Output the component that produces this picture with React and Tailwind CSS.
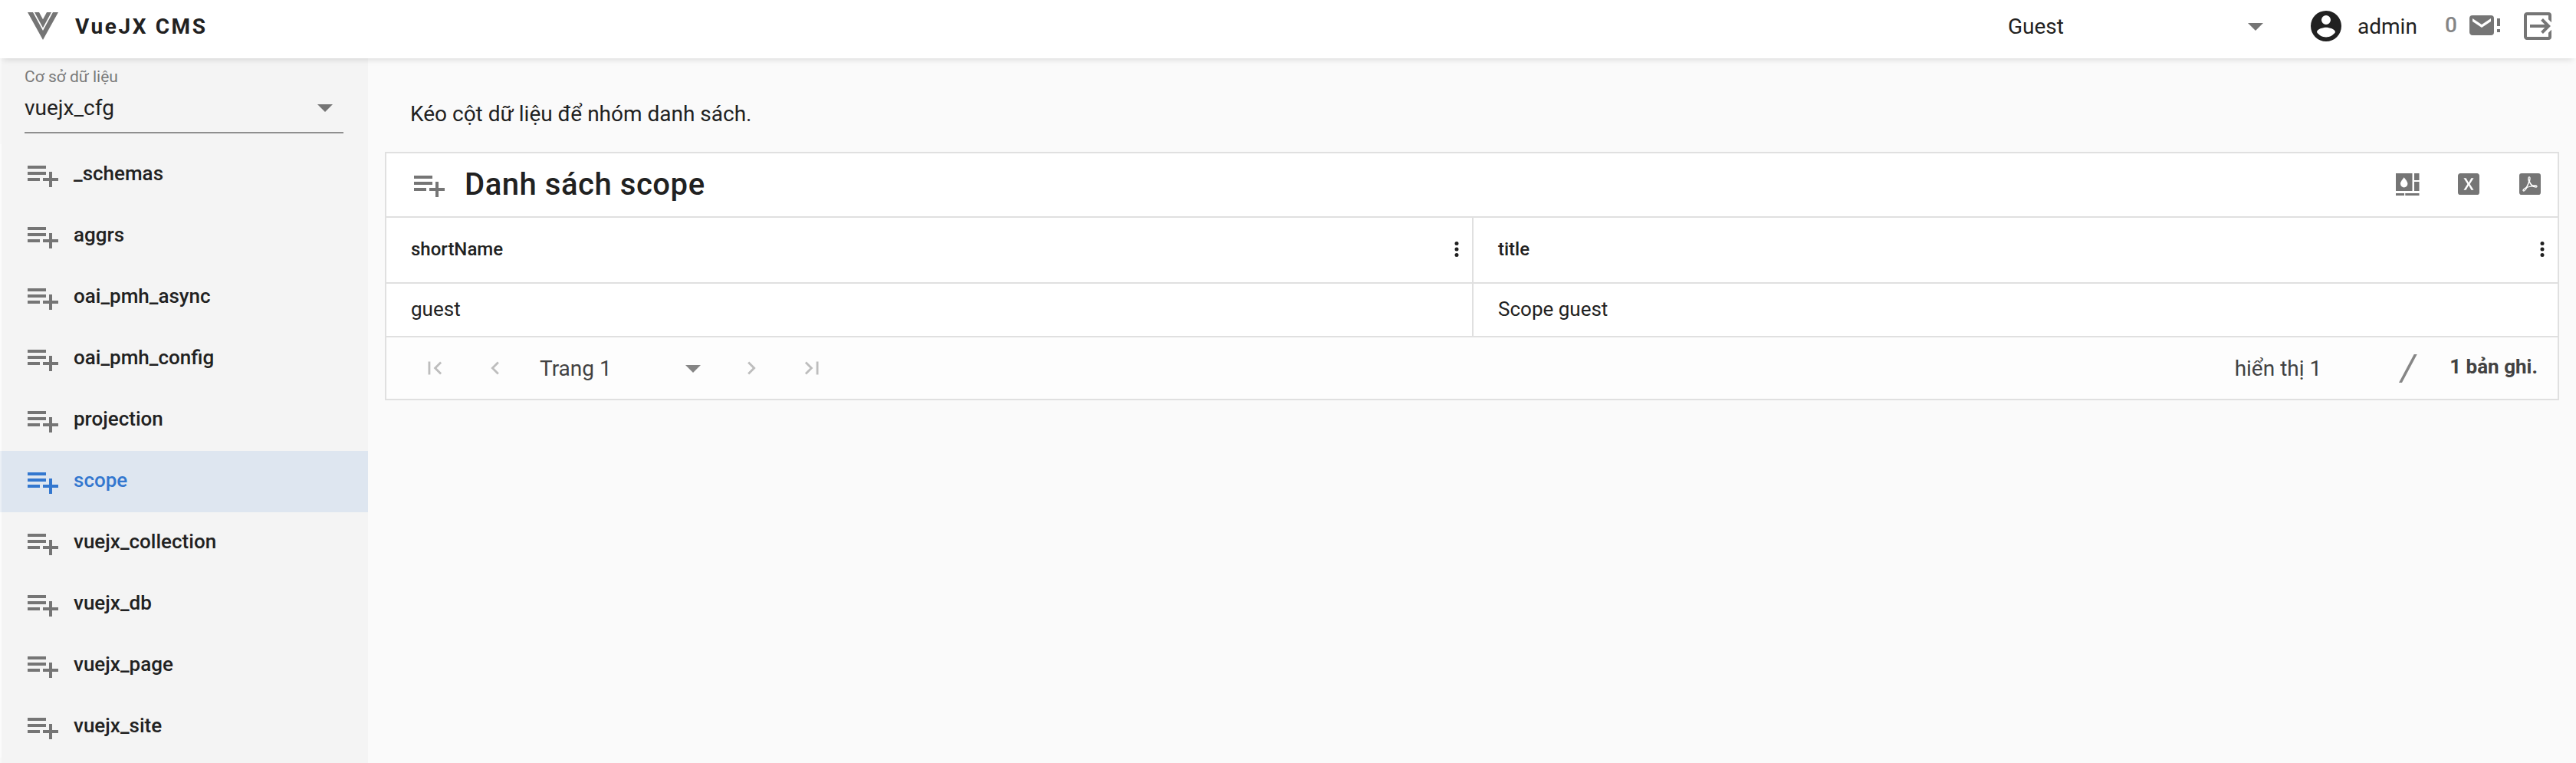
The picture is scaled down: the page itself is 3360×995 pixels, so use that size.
const ICONS = {
  vue: "M2,3H5.5L12,15L18.5,3H22L12,21L2,3M6.5,3H9.5L12,7.58L14.5,3H17.5L12,13.08L6.5,3Z",
  playlist: "M2,16H10V14H2M18,14V10H16V14H12V16H16V20H18V16H22V14M14,6H2V8H14M14,10H2V12H14V10Z",
  caret: "M7,10L12,15L17,10H7Z",
  account:
    "M12,19.2C9.5,19.2 7.29,17.92 6,16C6.03,14 10,12.9 12,12.9C14,12.9 17.97,14 18,16C16.71,17.92 14.5,19.2 12,19.2M12,5A3,3 0 0,1 15,8A3,3 0 0,1 12,11A3,3 0 0,1 9,8A3,3 0 0,1 12,5M12,2A10,10 0 0,0 2,12A10,10 0 0,0 12,22A10,10 0 0,0 22,12C22,6.47 17.5,2 12,2Z",
  mailAlert:
    "M16,9V7L10,11L4,7V9L10,13L16,9M16,5A2,2 0 0,1 18,7V16A2,2 0 0,1 16,18H4C2.89,18 2,17.1 2,16V7A2,2 0 0,1 4,5H16M20,12V7H22V12H20M20,16V14H22V16H20Z",
  logout:
    "M14.08,15.59L16.67,13H7V11H16.67L14.08,8.41L15.49,7L20.49,12L15.49,17L14.08,15.59M19,3A2,2 0 0,1 21,5V9.67L19,7.67V5H5V19H19V16.33L21,14.33V19A2,2 0 0,1 19,21H5C3.89,21 3,20.1 3,19V5C3,3.89 3.89,3 5,3H19Z",
  dots: "M12,16A2,2 0 0,1 14,18A2,2 0 0,1 12,20A2,2 0 0,1 10,18A2,2 0 0,1 12,16M12,10A2,2 0 0,1 14,12A2,2 0 0,1 12,14A2,2 0 0,1 10,12A2,2 0 0,1 12,10M12,4A2,2 0 0,1 14,6A2,2 0 0,1 12,8A2,2 0 0,1 10,6A2,2 0 0,1 12,4Z",
  first: "M18.41,16.59L13.82,12L18.41,7.41L17,6L11,12L17,18L18.41,16.59M6,6H8V18H6V6Z",
  prev: "M15.41,16.58L10.83,12L15.41,7.41L14,6L8,12L14,18L15.41,16.58Z",
  next: "M8.59,16.58L13.17,12L8.59,7.41L10,6L16,12L10,18L8.59,16.58Z",
  last: "M5.59,7.41L10.18,12L5.59,16.59L7,18L13,12L7,6L5.59,7.41M16,6H18V18H16V6Z",
  excel:
    "M16.2,17H14.2L12,13.2L9.8,17H7.8L11,12L7.8,7H9.8L12,10.8L14.2,7H16.2L13,12M19,3H5C3.89,3 3,3.89 3,5V19A2,2 0 0,0 5,21H19A2,2 0 0,0 21,19V5C21,3.89 20.1,3 19,3Z",
  pdf: "M11.43,10.94C11.2,11.68 10.87,12.47 10.42,13.34C10.22,13.72 10,14.08 9.92,14.38L10.03,14.34V14.34C11.3,13.85 12.5,13.57 13.37,13.41C13.22,13.31 13.08,13.2 12.96,13.09C12.36,12.58 11.84,11.84 11.43,10.94M17.91,14.75C17.74,14.94 17.44,15.05 17,15.05C16.24,15.05 15,14.82 14,14.31C12.28,14.5 11,14.73 9.97,15.06C9.92,15.08 9.86,15.1 9.79,15.13C8.55,17.25 7.63,18.2 6.82,18.2C6.66,18.2 6.5,18.16 6.38,18.09L5.9,17.78L5.87,17.73C5.8,17.55 5.78,17.38 5.82,17.19C5.93,16.66 6.5,15.82 7.7,15.07C7.89,14.93 8.19,14.77 8.59,14.58C8.89,14.06 9.21,13.45 9.55,12.78C10.06,11.75 10.38,10.73 10.63,9.85V9.84C10.26,8.63 10.04,7.9 10.41,6.57C10.5,6.19 10.83,5.8 11.2,5.8H11.44C11.67,5.8 11.88,5.88 12.05,6.04C12.71,6.7 12.4,8.31 12.07,9.64C12.05,9.7 12.04,9.75 12.03,9.78C12.43,10.91 13,11.82 13.63,12.34C13.89,12.54 14.18,12.74 14.5,12.92C14.95,12.87 15.38,12.85 15.79,12.85C17.03,12.85 17.78,13.07 18.07,13.54C18.17,13.7 18.22,13.89 18.19,14.09C18.18,14.34 18.09,14.57 17.91,14.75M17.5,14.04C17.4,13.94 17,13.69 15.6,13.69C15.53,13.69 15.46,13.69 15.37,13.79C16.1,14.11 16.81,14.3 17.27,14.3C17.34,14.3 17.4,14.29 17.46,14.28H17.5C17.55,14.26 17.58,14.25 17.59,14.15C17.57,14.12 17.55,14.08 17.5,14.04M8.33,15.5C8.12,15.62 7.95,15.73 7.85,15.81C7.14,16.46 6.69,17.12 6.64,17.5C7.09,17.35 7.68,16.69 8.33,15.5M11.35,8.59L11.4,8.55C11.47,8.23 11.5,7.95 11.56,7.73L11.59,7.57C11.69,7 11.67,6.71 11.5,6.47L11.35,6.42C11.33,6.45 11.3,6.5 11.28,6.54C11.11,6.96 11.12,7.69 11.35,8.59Z",
};

function Icon({ name, className = "size-12 text-[#757575]" }) {
  return (
    <svg viewBox="0 0 24 24" fill="currentColor" className={`shrink-0 ${className}`}>
      <path d={ICONS[name]} />
    </svg>
  );
}

function TemplateIcon() {
  return (
    <svg viewBox="0 0 31 29" fill="#757575" className="h-[29px] w-[31px]">
      <path fillRule="evenodd" d="M0 0H21.5V23H0ZM10.7 5.2C9 8 6 10.500 6 13.700A4.700 4.700 0 0 0 15.400 13.700C15.400 10.500 12.400 8 10.700 5.200Z" />
      <path d="M24 0H30.500V9H24ZM24 11H30.500V23H24ZM0 26H11V29H0ZM12.300 26H30.500V29H12.300Z" />
    </svg>
  );
}

function PdfIcon() {
  return (
    <svg viewBox="3 3 18 18" className="size-7">
      <rect x="3" y="3" width="18" height="18" rx="2" fill="#757575" />
      <path d={ICONS.pdf} fill="#fff" />
    </svg>
  );
}

const COLLECTIONS = [
  "_schemas",
  "aggrs",
  "oai_pmh_async",
  "oai_pmh_config",
  "projection",
  "scope",
  "vuejx_collection",
  "vuejx_db",
  "vuejx_page",
  "vuejx_site",
];

function Header() {
  return (
    <header className="relative z-10 flex h-[76px] items-center bg-white pr-[26px] pb-2 pl-8 text-[28px] shadow-[0_6px_8px_-4px_rgba(0,0,0,0.12)]">
      <Icon name="vue" />
      <h1 className="ml-[18px] pt-px font-bold tracking-[2.6px]">VueJX CMS</h1>
      <div className="ml-auto flex items-center">
        <span className="w-[299px] pt-px">Guest</span>
        <Icon name="caret" />
        <Icon name="account" className="ml-11 size-12 text-[#212121]" />
        <span className="ml-[17px] w-[114px] pt-px">admin</span>
        <span className="w-7 pb-[3px] font-medium text-[#858585]">0</span>
        <Icon name="mailAlert" />
        <Icon name="logout" className="ml-[21px] size-12 text-[#757575]" />
      </div>
    </header>
  );
}

function Sidebar() {
  return (
    <aside className="w-[480px] shrink-0 border-l-2 border-white/40 bg-[#f4f4f4]">
      <div className="mr-8 ml-[30px] flex h-[98px] flex-col border-b-2 border-[#8f8f8f] pt-[11px]">
        <span className="h-[26px] text-[21px] leading-[26px] text-[#7a7a7a]">Cơ sở dữ liệu</span>
        <div className="mt-[3px] flex h-12 items-center justify-between">
          <span className="pt-px text-[28px]">vuejx_cfg</span>
          <Icon name="caret" />
        </div>
      </div>
      <nav className="mt-[14px] -ml-[2px]">
        {COLLECTIONS.map((name) => {
          const active = name === "scope";
          return (
            <a
              key={name}
              className={`flex h-20 items-center border-l-2 border-white/40 pl-[30px] text-[26px] font-medium ${active ? "bg-[#dee6f0] text-[#3377cf]" : "text-[#212121]"}`}
            >
              <Icon name="playlist" className={active ? "size-12" : "size-12 text-[#757575]"} />
              <span className="ml-4 pb-1">{name}</span>
            </a>
          );
        })}
      </nav>
    </aside>
  );
}

function HeadCell({ children, className }) {
  return (
    <div className={`flex items-center justify-between pb-0.5 pl-8 text-[24px] font-medium ${className}`}>
      <span>{children}</span>
      <Icon name="dots" className="size-[30px] text-[#212121]" />
    </div>
  );
}

function ScopeCard() {
  return (
    <section className="mr-[22px] ml-[22px] border-2 border-[#e0e0e0] bg-white">
      <div className="flex h-[84px] items-center border-b-2 border-[#e0e0e0] pr-[22px] pl-8">
        <Icon name="playlist" />
        <h2 className="ml-[22px] pb-px text-[40px] font-medium tracking-[0.55px]">Danh sách scope</h2>
        <div className="ml-auto flex items-center pb-0.5">
          <TemplateIcon />
          <svg viewBox="3 3 18 18" fill="#757575" className="mr-[52px] ml-[50px] size-7">
            <path d={ICONS.excel} />
          </svg>
          <PdfIcon />
        </div>
      </div>
      <div className="grid grid-cols-[1418px_1fr] border-b-2 border-[#e0e0e0]">
        <HeadCell className="h-[86px] border-r-2 border-b-2 border-[#e0e0e0] pr-[5px]">shortName</HeadCell>
        <HeadCell className="border-b-2 border-[#e0e0e0] pr-[5px]">title</HeadCell>
        <div className="flex h-[68px] items-center border-r-2 border-[#e0e0e0] pb-0.5 pl-8 text-[26px]">guest</div>
        <div className="flex items-center pb-0.5 pl-8 text-[26px]">Scope guest</div>
      </div>
      <div className="flex h-20 items-center bg-[#fdfdfd] pr-[26px] text-[28px] text-[#424242]">
        <Icon name="first" className="ml-[46px] size-[34px] text-[#bdbdbd]" />
        <Icon name="prev" className="ml-[45px] size-[34px] text-[#bdbdbd]" />
        <span className="ml-[41px] w-[176px] pt-px">Trang 1</span>
        <Icon name="caret" className="size-12 text-[#858585]" />
        <Icon name="next" className="ml-[35px] size-[34px] text-[#bdbdbd]" />
        <Icon name="last" className="ml-[45px] size-[34px] text-[#bdbdbd]" />
        <span className="ml-auto pt-px">hiển thị 1</span>
        <svg viewBox="0 0 24 37" fill="#868686" className="mr-[42px] ml-[101px] h-[37px] w-6">
          <path d="M0 37L19.700 0H23.700L4 37Z" />
        </svg>
        <span className="pb-[3px] text-[26px] font-bold">1 bản ghi.</span>
      </div>
    </section>
  );
}

export default function App() {
  return (
    <div className="flex h-[995px] flex-col overflow-hidden bg-[#fafafa] font-[Roboto,sans-serif] text-[#212121]">
      <Header />
      <div className="flex flex-1">
        <Sidebar />
        <main className="flex-1">
          <p className="flex h-[122px] items-center pt-[23px] pl-[55px] text-[28px]">Kéo cột dữ liệu để nhóm danh sách.</p>
          <ScopeCard />
        </main>
      </div>
    </div>
  );
}
